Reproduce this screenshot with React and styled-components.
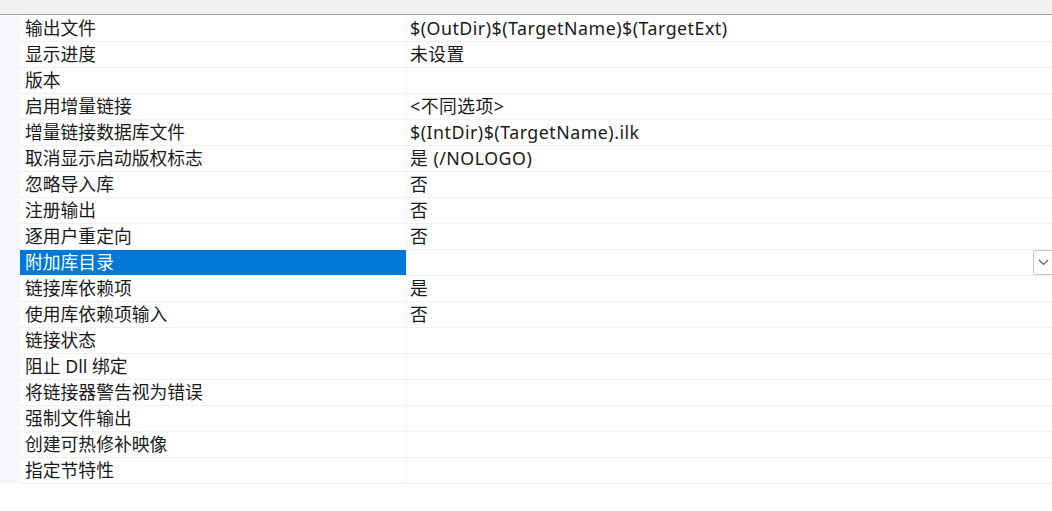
import React from "react";
import styled, { createGlobalStyle } from "styled-components";

const Global = createGlobalStyle`
  html, body { margin: 0; padding: 0; background: #ffffff; }
  body { font-family: "Noto Sans", "Noto Sans CJK SC", sans-serif; }
  * { box-sizing: border-box; }
`;

const Page = styled.div`
  width: 1052px;
  height: 511px;
  background: #ffffff;
  overflow: hidden;
`;

const TopBar = styled.div`
  height: 15px;
  background: #f0f0f0;
  border-bottom: 1px solid #a3a3a3;
`;

const Body = styled.div`
  display: flex;
  padding-top: 1px;
`;

const Gutter = styled.div`
  width: 20px;
  flex: none;
  background: #f5f7fb;
  margin-top: -1px;
  height: 468px;
`;

const Grid = styled.div`
  flex: 1;
  display: flex;
  flex-direction: column;
`;

const Row = styled.div`
  display: grid;
  grid-template-columns: 387px 1fr;
  height: 26px;
  border-bottom: 1px solid #f0f1f5;
  position: relative;
`;

const NameCell = styled.div`
  display: flex;
  align-items: center;
  padding-left: 5px;
  padding-top: 1px;
  font-size: 17.8px;
  color: ${(p) => (p.$selected ? "#ffffff" : "#1a1a1a")};
  background: ${(p) => (p.$selected ? "#0078d7" : "transparent")};
  border-right: 1px solid #f0f1f5;
  white-space: nowrap;
  line-height: 1;
`;

const ValueCell = styled.div`
  display: flex;
  align-items: center;
  padding-left: 3px;
  padding-top: 1px;
  font-size: 17.8px;
  letter-spacing: 0.5px;
  color: #1a1a1a;
  white-space: nowrap;
  line-height: 1;
`;

const DropButton = styled.div`
  position: absolute;
  left: 1013px;
  top: 0;
  width: 22px;
  height: 25px;
  border: 1px solid #c8c8c8;
  border-radius: 2px;
  background: #ffffff;
  display: flex;
  align-items: center;
  justify-content: flex-start;
  padding-left: 4px;
`;

const rows = [
  ["输出文件", "$(OutDir)$(TargetName)$(TargetExt)"],
  ["显示进度", "未设置"],
  ["版本", ""],
  ["启用增量链接", "<不同选项>"],
  ["增量链接数据库文件", "$(IntDir)$(TargetName).ilk"],
  ["取消显示启动版权标志", "是 (/NOLOGO)"],
  ["忽略导入库", "否"],
  ["注册输出", "否"],
  ["逐用户重定向", "否"],
  ["附加库目录", "", true],
  ["链接库依赖项", "是"],
  ["使用库依赖项输入", "否"],
  ["链接状态", ""],
  ["阻止 Dll 绑定", ""],
  ["将链接器警告视为错误", ""],
  ["强制文件输出", ""],
  ["创建可热修补映像", ""],
  ["指定节特性", ""],
];

export default function App() {
  return (
    <Page>
      <Global />
      <TopBar />
      <Body>
        <Gutter />
        <Grid>
          {rows.map(([name, value, selected]) => (
            <Row key={name}>
              <NameCell $selected={selected}>{name}</NameCell>
              <ValueCell>{value}</ValueCell>
              {selected && (
                <DropButton>
                  <svg width="11" height="7" viewBox="0 0 11 7">
                    <path d="M1 1 L5.5 5.5 L10 1" fill="none" stroke="#555" strokeWidth="1.1" />
                  </svg>
                </DropButton>
              )}
            </Row>
          ))}
        </Grid>
      </Body>
    </Page>
  );
}
